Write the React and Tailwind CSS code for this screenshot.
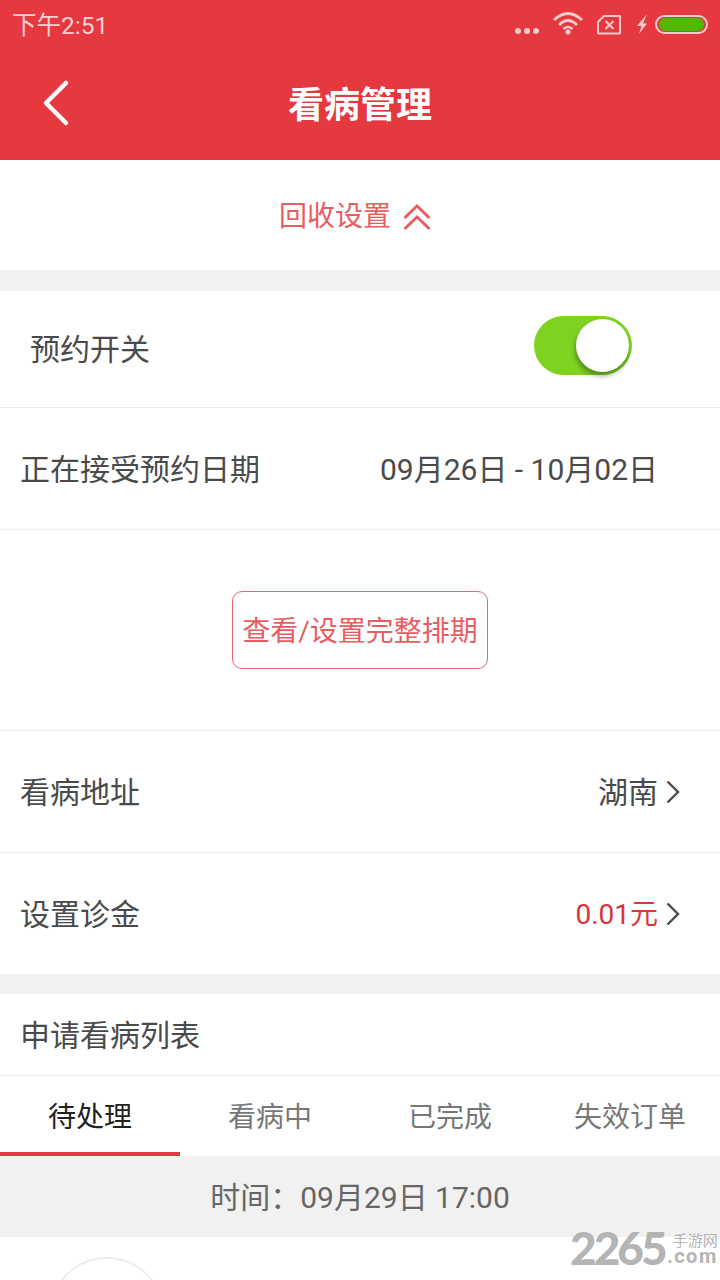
const cjk = { fontFamily: 'Roboto, "Noto Sans CJK SC", sans-serif' };

function Chevron({ className = "" }) {
  return (
    <svg width="16" height="24" viewBox="0 0 16 24" className={className} fill="none" stroke="#4a4a4a" strokeWidth="2.4">
      <path d="M2.5 1.5 L13 12 L2.5 22.5" />
    </svg>
  );
}

function StatusBar() {
  const c = "#f9c9cb";
  return (
    <div className="h-[50px] flex items-center justify-between pl-3">
      <span className="text-[24.500px] text-[#fbd0d2] leading-none mt-[2px]">下午2:51</span>
      <svg className="mr-[10px]" width="200" height="50" viewBox="0 0 200 50" fill="none">
        <circle cx="8" cy="31" r="3" fill={c} />
        <circle cx="17" cy="31" r="3" fill={c} />
        <circle cx="26" cy="31" r="3" fill={c} />
        <path d="M44 20 Q58 7 72 20" stroke={c} strokeWidth="3" />
        <path d="M49 25 Q58 16 67 25" stroke={c} strokeWidth="3" />
        <path d="M53.500 29 Q58 25 62.500 29" stroke={c} strokeWidth="2.500" />
        <circle cx="58" cy="32" r="2.500" fill={c} />
        <path d="M94 16 H110 V33.500 H88 V22 Z" stroke={c} strokeWidth="2" strokeLinejoin="round" />
        <path d="M95.500 21 L103.500 29 M103.500 21 L95.500 29" stroke={c} strokeWidth="2" />
        <path d="M137 14 L127 26 H131.500 L129 34 L137 23.500 H133 Z" fill={c} />
        <rect x="146" y="16" width="51" height="17" rx="8.500" stroke={c} strokeWidth="2" />
        <rect x="149" y="18" width="45" height="13" rx="6.500" fill="#4cbb00" />
      </svg>
    </div>
  );
}

function Row({ h, left, right, border = true, leftClass = "pl-[20px]", textOffset = "mt-[3px]" }) {
  return (
    <div className={`flex items-center justify-between bg-white ${h} ${border ? "border-b border-[#eeeeee]" : ""} ${leftClass}`}>
      <span className={`text-[30px] text-[#4a4a4a] leading-none ${textOffset}`}>{left}</span>
      {right}
    </div>
  );
}

function Tab({ label, active }) {
  return (
    <div className="flex-1 relative flex items-center justify-center">
      <span className={`text-[28px] leading-none mt-[4px] ${active ? "text-[#222222]" : "text-[#777777]"}`}>{label}</span>
      {active && <div className="absolute left-0 right-0 bottom-0 h-[4px] bg-[#e5393f]"></div>}
    </div>
  );
}

export default function App() {
  return (
    <div className="w-[720px] h-[1280px] overflow-hidden bg-white relative" style={cjk}>
      <div className="bg-[#e5393f] h-[160px]">
        <StatusBar />
        <div className="h-[110px] relative flex items-center justify-center">
          <svg className="absolute left-[40px] top-[29px]" width="32" height="48" viewBox="0 0 32 48" fill="none" stroke="#fff" strokeWidth="4.500" strokeLinecap="round" strokeLinejoin="round">
            <path d="M26 4 L6 24 L26 44" />
          </svg>
          <span className="text-[36px] font-bold text-white leading-none mt-[2px]">看病管理</span>
        </div>
      </div>

      <div className="h-[110px] flex items-center justify-center gap-[12px] pr-[10px]">
        <span className="text-[28px] text-[#e85d61] leading-none mt-[3px]">回收设置</span>
        <svg className="mt-[3px]" width="28" height="28" viewBox="0 0 28 28" fill="none" stroke="#e85d61" strokeWidth="3">
          <path d="M1.500 15 L14 3 L26.500 15" />
          <path d="M1.500 26 L14 14 L26.500 26" />
        </svg>
      </div>

      <div className="h-[21px] bg-[#f1f1f1]"></div>

      <Row
        h="h-[117px]"
        leftClass="pl-[30px]"
        textOffset="mt-[1px]"
        left="预约开关"
        right={
          <div className="relative w-[98px] h-[59px] mr-[88px] mb-[7px] rounded-full bg-[#7ed321]">
            <div className="absolute right-[3px] top-[3px] w-[53px] h-[53px] rounded-full bg-white shadow-[-1px_4px_5px_rgba(0,0,0,0.35)]"></div>
          </div>
        }
      />
      <Row
        h="h-[122px]"
        left="正在接受预约日期"
        right={<span className="text-[30px] text-[#4a4a4a] leading-none mr-[62px] mt-[3px]">09月26日 - 10月02日</span>}
      />
      <div className="h-[201px] bg-white border-b border-[#eeeeee] flex items-center justify-center">
        <div className="w-[256px] h-[78px] rounded-[10px] border border-[#e5666a] flex items-center justify-center">
          <span className="text-[28px] text-[#e85d61] leading-none whitespace-nowrap mt-[3px]">查看/设置完整排期</span>
        </div>
      </div>
      <Row
        h="h-[122px]"
        left="看病地址"
        right={
          <div className="flex items-center gap-[7px] pr-[39px]">
            <span className="text-[30px] text-[#4a4a4a] leading-none mt-[3px]">湖南</span>
            <Chevron />
          </div>
        }
      />
      <Row
        h="h-[121px]"
        border={false}
        left="设置诊金"
        right={
          <div className="flex items-center gap-[7px] pr-[39px]">
            <span className="text-[28px] text-[#d9363b] leading-none mt-[3px]">0.01元</span>
            <Chevron />
          </div>
        }
      />
      <div className="h-[20px] bg-[#f1f1f1]"></div>
      <div className="h-[82px] bg-white border-b border-[#eeeeee] flex items-center pl-[20px]">
        <span className="text-[30px] text-[#4a4a4a] leading-none mt-[3px]">申请看病列表</span>
      </div>
      <div className="h-[80px] flex bg-white">
        <Tab label="待处理" active />
        <Tab label="看病中" />
        <Tab label="已完成" />
        <Tab label="失效订单" />
      </div>
      <div className="h-[81px] bg-[#f1f1f1] flex items-center justify-center">
        <span className="text-[30px] text-[#666666] leading-none mt-[2px]">时间：09月29日 17:00</span>
      </div>
      <div className="bg-white pl-[49px] pt-[20px]">
        <div className="w-[116px] h-[116px] rounded-full border-2 border-[#eeeeee]"></div>
      </div>

      <div className="absolute left-[570px] top-[1224px] flex items-start text-[#b4b4b4]">
        <span className="text-[46px] font-black leading-[48px] tracking-[-3px]" style={{ fontFamily: 'Lato, sans-serif' }}>2265</span>
        <div className="flex flex-col items-end w-[53px] pt-[11px]">
          <span className="text-[15px] leading-[13px]">手游网</span>
          <span className="text-[20px] font-bold leading-[16px] tracking-[1.500px]">.com</span>
        </div>
      </div>
    </div>
  );
}
